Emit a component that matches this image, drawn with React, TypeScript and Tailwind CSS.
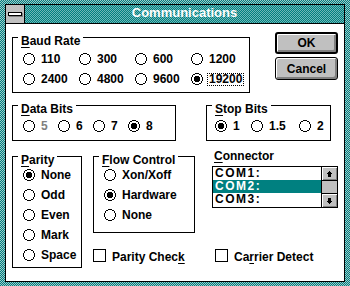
import React from "react";

// pixel patterns, Win 3.1 style
const RADIO = [
  "....XXXX....",
  "..XX....XX..",
  ".X........X.",
  ".X........X.",
  "X..........X",
  "X..........X",
  "X..........X",
  "X..........X",
  ".X........X.",
  ".X........X.",
  "..XX....XX..",
  "....XXXX....",
];
const DOT = [".XXXX.", "XXXXXX", "XXXXXX", "XXXXXX", "XXXXXX", ".XXXX."];
const ARROW_UP = ["..X..", ".XXX.", "XXXXX", ".XXX.", ".XXX.", ".XXX."];
const ARROW_DOWN = [...ARROW_UP].reverse();

function pixelPath(rows: string[], ox = 0, oy = 0) {
  let d = "";
  rows.forEach((r, y) => {
    [...r].forEach((c, x) => {
      if (c === "X") d += `M${x + ox} ${y + oy}h1v1h-1z`;
    });
  });
  return d;
}

function Pixels({ rows }: { rows: string[] }) {
  const w = rows[0].length;
  const h = rows.length;
  return (
    <svg width={w} height={h} viewBox={`0 0 ${w} ${h}`} shapeRendering="crispEdges" className="shrink-0">
      <path d={pixelPath(rows)} fill="#000" />
    </svg>
  );
}

function Radio({
  label,
  checked = false,
  disabled = false,
  focus = false,
  className = "",
}: {
  label: string;
  checked?: boolean;
  disabled?: boolean;
  focus?: boolean;
  className?: string;
}) {
  return (
    <div className={`flex items-center h-[20px] ${className}`}>
      <svg width="12" height="12" viewBox="0 0 12 12" shapeRendering="crispEdges" className="shrink-0">
        <path d={pixelPath(RADIO)} fill="#000" />
        {checked && <path d={pixelPath(DOT, 3, 3)} fill="#000" />}
      </svg>
      {focus ? (
        <span className="ml-[4px] px-[1px] leading-[11px] border border-dotted border-black">{label}</span>
      ) : (
        <span className={`ml-[6px] ${disabled ? "text-[#808080]" : ""}`}>{label}</span>
      )}
    </div>
  );
}

function Group({
  caption,
  className,
  children,
}: {
  caption: React.ReactNode;
  className: string;
  children: React.ReactNode;
}) {
  return (
    <div className={`relative border border-black ${className}`}>
      <span className="absolute left-[5px] top-[-3px] bg-white px-[3px] leading-[12px] whitespace-nowrap">
        {caption}
      </span>
      {children}
    </div>
  );
}

function Checkbox({ children, className = "" }: { children: React.ReactNode; className?: string }) {
  return (
    <div className={`flex items-start ${className}`}>
      <div className="w-[13px] h-[13px] border border-black bg-white shrink-0" />
      <span className="ml-[6px] mt-[2px] leading-[12px]">{children}</span>
    </div>
  );
}

const U = ({ children }: { children: React.ReactNode }) => (
  <span className="underline underline-offset-[2px]">{children}</span>
);

export default function App() {
  const frame =
    "bg-[image:repeating-conic-gradient(#008080_0_25%,#a0c8c8_0_50%)] bg-[length:2px_2px]";
  const title =
    "bg-[image:repeating-conic-gradient(#008080_0_25%,#70b8b8_0_50%)] bg-[length:2px_2px]";

  return (
    <div
      className={`w-[350px] h-[286px] pt-[4px] pb-[4px] px-[5px] ${frame} font-['Liberation_Sans',Arial,sans-serif] text-[12px] font-bold leading-[12px] text-black`}
    >
      <div className="h-full border border-black bg-white flex flex-col">
        {/* title bar */}
        <div className="h-[19px] shrink-0 flex border-b border-black">
          <div className="w-[19px] border-r border-black bg-[#c0c0c0] flex items-start justify-center pt-[7px]">
            <div className="w-[14px] h-[4px] border border-black bg-white shadow-[1px_1px_0_#808080]" />
          </div>
          <div className={`flex-1 ${title} flex justify-center text-white text-[13px] leading-[16px]`}>
            Communications
          </div>
        </div>

        {/* body */}
        <div className="flex-1 pl-[6px]">
          {/* row 1 */}
          <div className="flex items-start">
            <Group
              className="mt-[13px] w-[238px] h-[56px]"
              caption={
                <>
                  <U>B</U>aud Rate
                </>
              }
            >
              <div className="grid grid-cols-[56px_56px_56px_56px] pl-[10px] pt-[11px]">
                <Radio label="110" />
                <Radio label="300" />
                <Radio label="600" />
                <Radio label="1200" />
                <Radio label="2400" />
                <Radio label="4800" />
                <Radio label="9600" />
                <Radio label="19200" checked focus />
              </div>
            </Group>

            <div className="ml-[25px] mt-[8px] w-[63px] flex flex-col gap-[3px]">
              <div className="h-[22px] rounded-[3px] border-2 border-black bg-[#c0c0c0] shadow-[inset_1px_1px_0_#fff,inset_-2px_-2px_0_#808080] flex items-center justify-center">
                OK
              </div>
              <div className="h-[23px] rounded-[3px] border border-black bg-[#c0c0c0] shadow-[inset_1px_1px_0_#fff,inset_-2px_-2px_0_#808080] flex items-center justify-center">
                Cancel
              </div>
            </div>
          </div>

          {/* row 2 */}
          <div className="flex mt-[12px]">
            <Group
              className="w-[164px] h-[36px]"
              caption={
                <>
                  <U>D</U>ata Bits
                </>
              }
            >
              <div className="flex pl-[10px] pt-[10px]">
                <Radio label="5" disabled className="w-[35px]" />
                <Radio label="6" className="w-[35px]" />
                <Radio label="7" className="w-[35px]" />
                <Radio label="8" checked />
              </div>
            </Group>
            <Group
              className="ml-[30px] w-[125px] h-[36px]"
              caption={
                <>
                  <U>S</U>top Bits
                </>
              }
            >
              <div className="flex pl-[8px] pt-[10px]">
                <Radio label="1" checked className="w-[36px]" />
                <Radio label="1.5" className="w-[48px]" />
                <Radio label="2" />
              </div>
            </Group>
          </div>

          {/* row 3 */}
          <div className="flex items-start mt-[7px]">
            <Group
              className="mt-[8px] w-[70px] h-[112px]"
              caption={
                <>
                  <U>P</U>arity
                </>
              }
            >
              <div className="flex flex-col pl-[10px] pt-[8px]">
                <Radio label="None" checked />
                <Radio label="Odd" />
                <Radio label="Even" />
                <Radio label="Mark" />
                <Radio label="Space" />
              </div>
            </Group>

            <div className="ml-[11px] flex flex-col">
              <div className="flex items-start">
                <Group
                  className="mt-[8px] w-[102px] h-[77px]"
                  caption={
                    <>
                      <U>F</U>low Control
                    </>
                  }
                >
                  <div className="flex flex-col pl-[10px] pt-[8px]">
                    <Radio label="Xon/Xoff" />
                    <Radio label="Hardware" checked />
                    <Radio label="None" />
                  </div>
                </Group>

                <div className="ml-[17px] flex flex-col">
                  <div className="mt-[2px] pl-[2px] leading-[12px]">
                    <U>C</U>onnector
                  </div>
                  <div className="mt-[4px] w-[126px] h-[42px] border border-black flex">
                    <div className="flex-1 flex flex-col text-[12px] leading-[13px] tracking-[1.5px]">
                      <div className="h-[13px] pl-[2px] overflow-hidden">COM1:</div>
                      <div className="h-[13px] pl-[2px] overflow-hidden bg-[#008080] text-white">COM2:</div>
                      <div className="h-[13px] pl-[2px] overflow-hidden">COM3:</div>
                    </div>
                    <div className="w-[16px] border-l border-black flex flex-col bg-[#c0c0c0]">
                      <div className="h-[14px] border-b border-black shadow-[inset_1px_1px_0_#fff,inset_-1px_-1px_0_#808080] flex items-center justify-center">
                        <Pixels rows={ARROW_UP} />
                      </div>
                      <div className="flex-1" />
                      <div className="h-[14px] border-t border-black shadow-[inset_1px_1px_0_#fff,inset_-1px_-1px_0_#808080] flex items-center justify-center">
                        <Pixels rows={ARROW_DOWN} />
                      </div>
                    </div>
                  </div>
                </div>
              </div>

              <div className="flex mt-[16px]">
                <Checkbox className="w-[122px]">
                  Parity Chec<U>k</U>
                </Checkbox>
                <Checkbox>
                  Ca<U>r</U>rier Detect
                </Checkbox>
              </div>
            </div>
          </div>
        </div>
      </div>
    </div>
  );
}
